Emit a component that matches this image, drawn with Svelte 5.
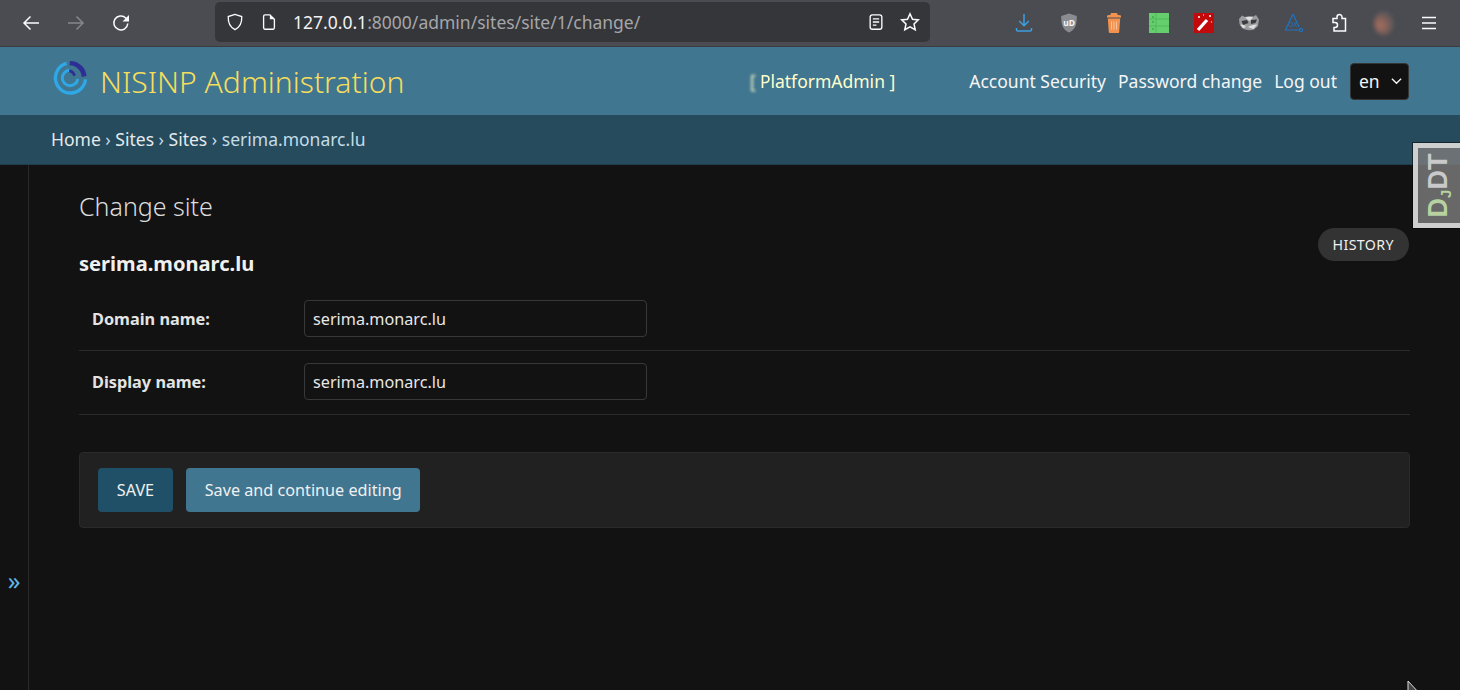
<script lang="ts">
  const crumbs = ['Home', 'Sites', 'Sites'];
  const fields = [
    { label: 'Domain name:', value: 'serima.monarc.lu' },
    { label: 'Display name:', value: 'serima.monarc.lu' }
  ];
</script>

<div class="page">
  <div class="browser">
    <div class="nav-buttons">
      <svg class="ico" viewBox="0 0 20 20"><path d="M18 10H3M9.500 3.500 3 10l6.500 6.500" /></svg>
      <svg class="ico off" viewBox="0 0 20 20"><path d="M2 10h15M10.500 3.500 17 10l-6.500 6.500" /></svg>
      <svg class="ico" viewBox="0 0 20 20"><path d="M16.800 10.500a7 7 0 1 1-2-5.500L17 7.200" /><path class="fill" d="M18 2v6.500h-6.500z" /></svg>
    </div>
    <div class="urlbar">
      <svg class="ico small" viewBox="0 0 20 20"><path d="M10 1.500 2.500 4c-.3 6.500 1.500 11.500 7.500 14.500 6-3 7.800-8 7.500-14.500z" /></svg>
      <svg class="ico small page-ico" viewBox="0 0 20 20"><path d="M4 3.500A1.500 1.500 0 0 1 5.500 2H11l5 5v9.500a1.500 1.500 0 0 1-1.500 1.500h-9A1.500 1.500 0 0 1 4 16.500z" /><path class="fill" d="M11 2l5 5h-5z" /></svg>
      <span class="url"><span class="host">127.0.0.1</span>:8000/admin/sites/site/1/change/</span>
      <svg class="ico small reader" viewBox="0 0 20 20"><rect x="3.500" y="2" width="13" height="16" rx="2.500" /><path d="M6.500 6.500h7M6.500 10h7M6.500 13.500h4" /></svg>
      <svg class="ico star" viewBox="0 0 20 20"><path d="m10 1.800 2.500 5.400 5.800.7-4.300 4 1.200 5.800L10 14.800l-5.200 2.900L6 11.900l-4.300-4 5.800-.7z" /></svg>
    </div>
    <div class="extensions">
      <svg class="ext" viewBox="0 0 20 20"><path class="blue" d="M10 1v11.500M5.200 8 10 12.800 14.800 8M2.500 15v1.500a1.500 1.500 0 0 0 1.500 1.500h12a1.500 1.500 0 0 0 1.500-1.500V15" /></svg>
      <svg class="ext" viewBox="0 0 20 20"><path fill="#8a8c8f" d="M10 .5 2.200 3c0 8 1 13.500 7.800 16.500C16.800 16.500 17.800 11 17.800 3z" /><text x="10" y="12.500" class="ub">uD</text></svg>
      <svg class="ext" viewBox="0 0 20 20"><path fill="#f2924e" d="M7 0h6l.5 1.800 3.500.7v2H3v-2l3.500-.7zM3.800 5.500h12.400l-1 13.500a1 1 0 0 1-1 1H5.800a1 1 0 0 1-1-1z" /><path stroke="#fbc096" fill="none" d="M7.500 8.500v8M10 8.500v8M12.500 8.500v8" /></svg>
      <svg class="ext" viewBox="0 0 20 20"><rect width="20" height="20" fill="#64cf6c" /><path stroke="#55b75e" fill="none" d="M0 6h20M0 13h20M7 0v20" /><path stroke="#3c8a47" fill="none" d="M3 4h2M3 9h2M3 16h2" /></svg>
      <svg class="ext" viewBox="0 0 20 20"><rect width="20" height="20" fill="#c30a0a" /><path stroke="#fff" stroke-width="3.200" d="m4 17 9-10" /><path stroke="#fff" fill="none" d="M4 4h2M5 3v2M16 2v2M15 3h2M9 2h1M17 9h1" /></svg>
      <svg class="ext" viewBox="0 0 20 20">
        <path fill="#9b9d9e" d="M0 6 3 2.500 6 4c2.500-1 6-1 8.500-.5L17 2l3 4.500-1 6.500-4 3.500c-4 1.500-9 .5-12-1.500L.5 11z" />
        <path fill="#e0e0e0" d="M6 4.500c2.500-1 6-1 8 0L10.500 8zM1.500 12c2-1 4 0 5.500 2l-3 1zM9 14c3-2 6-2 9-2.500L14.500 16z" />
        <path fill="#3a3c40" d="M2.500 8 8 7l1.500 3-5.500 2zM12 7l6-.5-1.500 3.500-4.500 1z" />
      </svg>
      <svg class="ext" viewBox="0 0 20 20"><path class="tri" d="M9 1 1.500 17H15M9 1l6 13" /><circle class="tri" cx="17" cy="17" r="1.600" /><text x="9" y="14" class="ox">OX</text></svg>
      <svg class="ico ext-white" viewBox="0 0 20 20"><path d="M4 5.500h4V4a2.500 2.500 0 0 1 5 0v1.500h3.500V18H5v-3.500h1a2.500 2.500 0 0 0 0-5H4z" /></svg>
      <span class="avatar"></span>
      <svg class="ico menu" viewBox="0 0 20 20"><path d="M3 4.500h14M3 10h14M3 15.500h14" /></svg>
    </div>
  </div>

  <header class="header">
    <div class="brand">
      <svg class="logo" viewBox="0 0 36 36">
        <path class="ring outer" d="M14 3.500A15.500 15.500 0 1 0 33.400 20" />
        <path class="ring inner" d="M17 10.500a8 8 0 1 0 8.500 9" />
        <path class="dark" d="M17.500 1a17 17 0 0 1 17 15.500l-5 1A12.500 12.500 0 0 0 17 5.500z" />
        <path class="dark" d="M17 9.500a9.500 9.500 0 0 1 6.500 6l-2.500 1.500a6 6 0 0 0-4.500-4.500z" />
      </svg>
      <span class="title">NISINP Administration</span>
    </div>
    <div class="tools">
      <span class="user"><span class="blur">[</span><span class="soft">P</span>latformAdmin ]</span>
      <span class="links">
        <span>Account Security</span>
        <span>Password change</span>
        <span>Log out</span>
      </span>
      <span class="lang">en
        <svg viewBox="0 0 12 8"><path d="m1 1.500 5 5 5-5" /></svg>
      </span>
    </div>
  </header>

  <nav class="breadcrumbs">
    {#each crumbs as crumb}
      <span class="crumb">{crumb}</span><span class="sep">{' › '}</span>
    {/each}
    <span class="current">serima.monarc.lu</span>
  </nav>

  <div class="body">
    <aside class="side"><span class="toggle">»</span></aside>
    <main class="content">
      <div class="head-row">
        <div>
          <h1>Change site</h1>
          <h2>serima.monarc.lu</h2>
        </div>
        <span class="history">HISTORY</span>
      </div>
      <div class="form">
        {#each fields as field}
          <div class="row">
            <span class="label">{field.label}</span>
            <input type="text" value={field.value} />
          </div>
        {/each}
      </div>
      <div class="submit">
        <button class="primary">SAVE</button>
        <button class="secondary">Save and continue editing</button>
      </div>
    </main>
  </div>

  <div class="djdt"><span><i>D</i><i class="j">J</i>DT</span></div>
  <svg class="cursor" viewBox="0 0 14 14"><path d="M1 1v13h12z" /></svg>
</div>

<style>
  :global(body) {
    margin: 0;
    background: #121212;
  }

  .page {
    position: relative;
    width: 1460px;
    height: 690px;
    overflow: hidden;
    display: flex;
    flex-direction: column;
    font-family: "Noto Sans", "Open Sans", sans-serif;
    color: #f5f5f5;
    background: #121212;
  }

  /* browser chrome */
  .browser {
    height: 47px;
    box-sizing: border-box;
    flex: none;
    display: flex;
    align-items: center;
    background: #4a4c52;
    border-bottom: 1px solid #3a3c42;
    padding-left: 21px;
  }

  .ico {
    width: 20px;
    height: 20px;
    fill: none;
    stroke: #fbfbfe;
    stroke-width: 1.500;
    flex: none;
  }

  .ico .fill {
    fill: #fbfbfe;
    stroke: none;
  }

  .ico.off {
    stroke: #85868a;
  }

  .nav-buttons {
    display: flex;
    gap: 25px;
    width: 194px;
    flex: none;
  }

  .urlbar {
    width: 715px;
    height: 40px;
    box-sizing: border-box;
    flex: none;
    display: flex;
    align-items: center;
    background: #35363a;
    border-radius: 5px;
    padding: 0 10px 0 11px;
    margin-top: -3px;
  }

  .small {
    width: 18px;
    height: 18px;
  }

  .page-ico {
    margin-left: 16px;
  }

  .url {
    margin-left: 15px;
    flex: 1;
    font-size: 17.500px;
    color: #a5a6a9;
    white-space: nowrap;
  }

  .host {
    color: #f2f2f4;
  }

  .reader {
    margin-right: 15px;
    margin-left: -1px;
  }

  .extensions {
    display: flex;
    align-items: center;
    padding-left: 84px;
    gap: 25px;
  }

  .ext {
    width: 20px;
    height: 20px;
    flex: none;
    overflow: visible;
  }

  .blue {
    fill: none;
    stroke: #3d9fe0;
    stroke-width: 1.500;
  }

  .ub {
    font-size: 8.500px;
    font-weight: 700;
    fill: #f5f5f5;
    text-anchor: middle;
  }

  .tri {
    fill: none;
    stroke: #1e73c0;
    stroke-width: 1.200;
  }

  .ox {
    font-size: 6.500px;
    fill: #1e73c0;
    text-anchor: middle;
  }

  .avatar {
    width: 20px;
    height: 24px;
    flex: none;
    border-radius: 50%;
    background: radial-gradient(circle at 30% 60%, #a8705f 0, #7d5f58 40%, #55555a 75%, #4a4c52 100%);
    filter: blur(2px);
  }

  /* django header */
  .header {
    height: 68px;
    box-sizing: border-box;
    flex: none;
    display: flex;
    align-items: center;
    justify-content: space-between;
    background: #417690;
    padding: 0 51px 0 51px;
  }

  .brand {
    display: flex;
    align-items: center;
    gap: 12px;
    padding-left: 2px;
  }

  .logo {
    width: 35px;
    height: 35px;
    margin-top: -7px;
    flex: none;
  }

  .ring {
    fill: none;
    stroke: #2ea8e6;
  }

  .outer {
    stroke-width: 3.500;
  }

  .inner {
    stroke-width: 3;
  }

  .dark {
    fill: #2d2f94;
  }

  .title {
    font-size: 30.100px;
    font-weight: 300;
    color: #f5dd5d;
  }

  .tools {
    display: flex;
    align-items: center;
    font-size: 17.500px;
  }

  .user {
    color: #ffc;
    margin-right: 74px;
  }

  .blur {
    display: inline-block;
    width: 10px;
    filter: blur(1.500px);
  }

  .soft {
    filter: blur(0.500px);
  }

  .links {
    display: flex;
    gap: 12px;
    margin-right: 13px;
  }

  .lang {
    width: 59px;
    height: 37px;
    box-sizing: border-box;
    display: flex;
    align-items: center;
    justify-content: space-between;
    padding: 0 6px 0 8px;
    background: #121212;
    border: 1px solid #353535;
    border-radius: 4px;
  }

  .lang svg {
    width: 11px;
    height: 8px;
    fill: none;
    stroke: #f5f5f5;
    stroke-width: 1.500;
  }

  .breadcrumbs {
    height: 50px;
    box-sizing: border-box;
    flex: none;
    display: flex;
    align-items: center;
    white-space: pre;
    background: #264b5d;
    border-bottom: 1px solid #1f3d4c;
    padding: 0 0 1px 51px;
    font-size: 17.500px;
    color: #c4dce8;
  }

  .crumb {
    color: #e4e9ec;
  }

  /* content */
  .body {
    flex: 1;
    display: flex;
    min-height: 0;
  }

  .side {
    width: 29px;
    box-sizing: border-box;
    flex: none;
    border-right: 1px solid #2a2a2a;
    padding-top: 395px;
    text-align: center;
  }

  .toggle {
    color: #63b5e6;
    font-size: 25px;
    line-height: 40px;
    display: block;
  }

  .content {
    flex: 1;
    padding: 23px 50px 0;
  }

  .head-row {
    display: flex;
    justify-content: space-between;
    align-items: flex-start;
  }

  h1 {
    margin: 0;
    font-size: 25px;
    font-weight: 300;
    line-height: 36px;
    color: #dcdcdc;
  }

  h2 {
    margin: 27px 0 0;
    font-size: 20.100px;
    font-weight: 700;
    line-height: 26px;
    color: #f0f0f0;
  }

  .history {
    margin: 40px 1px 0 0;
    padding: 0 15px;
    height: 33px;
    line-height: 34px;
    border-radius: 17px;
    background: #333;
    font-size: 14.200px;
    letter-spacing: 0.400px;
    color: #f0f0f0;
  }

  .form {
    margin-top: 10px;
  }

  .row {
    display: flex;
    align-items: center;
    height: 64px;
    box-sizing: border-box;
    padding-left: 13px;
    border-bottom: 1px solid #2a2a2a;
  }

  .row + .row {
    padding-bottom: 2px;
  }

  .label {
    width: 212px;
    font-size: 16.300px;
    font-weight: 700;
    color: #e4e4e4;
  }

  input {
    width: 343px;
    height: 37px;
    box-sizing: border-box;
    padding: 0 8px;
    font: 16.200px "Noto Sans", "Open Sans", sans-serif;
    color: #e8e8e8;
    background: #121212;
    border: 1px solid #383838;
    border-radius: 4px;
  }

  .submit {
    margin-top: 37px;
    display: flex;
    gap: 13px;
    padding: 15px 18px 15px;
    background: #212121;
    border: 1px solid #2a2a2a;
    border-radius: 4px;
  }

  button {
    height: 44px;
    padding: 0 18.800px;
    border: none;
    border-radius: 4px;
    font: 16.200px "Noto Sans", "Open Sans", sans-serif;
    color: #f0f0f0;
  }

  .primary {
    background: #205067;
  }

  .secondary {
    background: #417690;
  }

  /* overlays */
  .djdt {
    position: absolute;
    right: 0;
    top: 143px;
    width: 47px;
    height: 85px;
    box-sizing: border-box;
    border: 5px solid rgba(235, 235, 235, 0.78);
    border-right: none;
    outline: 1px solid rgba(0, 0, 0, 0.5);
    background: rgba(120, 120, 120, 0.85);
    display: flex;
    align-items: center;
    justify-content: center;
  }

  .djdt span {
    transform: rotate(-90deg);
    font-family: "Liberation Sans", sans-serif;
    font-size: 27px;
    font-weight: 700;
    color: #c9c9c9;
    white-space: nowrap;
  }

  .djdt i {
    font-style: normal;
    color: #b7d2a0;
  }

  .djdt .j {
    position: relative;
    top: 4px;
    font-size: 15px;
  }

  .cursor {
    position: absolute;
    left: 1407px;
    top: 680px;
    width: 14px;
    height: 14px;
    fill: #444;
    stroke: #ddd;
    stroke-width: 1;
  }
</style>
